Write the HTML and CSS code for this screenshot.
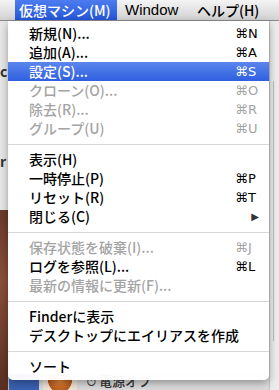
FILE: index.html
```html
<!DOCTYPE html>
<html lang="ja">
<head>
    <meta charset="UTF-8">
    <title>仮想マシン</title>
    <link rel="stylesheet" href="styles.css">
</head>
<body>
    <div class="menubar">
        <div class="bar-item active">仮想マシン(M)</div>
        <div class="bar-item">Window</div>
        <div class="bar-item">ヘルプ(H)</div>
    </div>

    <div class="desktop">
        <div class="left-strip">
            <span class="peek peek-c">c</span>
            <span class="peek peek-r">r</span>
            <div class="photo"></div>
        </div>
        <div class="window-area">
            <div class="bottom-row">
                <div class="thumb-blue"></div>
                <div class="thumb-orange"></div>
                <div class="power"><span class="power-icon">⏻</span> 電源オフ</div>
            </div>
        </div>
        <div class="right-strip">
            <div class="scroll-line"></div>
        </div>

        <!-- dropdown sits over the desktop -->
        <div class="menu">
            <div class="item"><span class="label">新規(N)...</span><span class="key">⌘N</span></div>
            <div class="item"><span class="label">追加(A)...</span><span class="key">⌘A</span></div>
            <div class="item selected"><span class="label">設定(S)...</span><span class="key">⌘S</span></div>
            <div class="item disabled"><span class="label">クローン(O)...</span><span class="key">⌘O</span></div>
            <div class="item disabled"><span class="label">除去(R)...</span><span class="key">⌘R</span></div>
            <div class="item disabled"><span class="label">グループ(U)</span><span class="key">⌘U</span></div>
            <div class="sep"></div>
            <div class="item"><span class="label">表示(H)</span><span class="key"></span></div>
            <div class="item"><span class="label">一時停止(P)</span><span class="key">⌘P</span></div>
            <div class="item"><span class="label">リセット(R)</span><span class="key">⌘T</span></div>
            <div class="item"><span class="label">閉じる(C)</span><span class="key arrow">▶</span></div>
            <div class="sep"></div>
            <div class="item disabled"><span class="label">保存状態を破棄(I)...</span><span class="key">⌘J</span></div>
            <div class="item"><span class="label">ログを参照(L)...</span><span class="key">⌘L</span></div>
            <div class="item disabled"><span class="label">最新の情報に更新(F)...</span><span class="key"></span></div>
            <div class="sep"></div>
            <div class="item"><span class="label">Finderに表示</span><span class="key"></span></div>
            <div class="item"><span class="label">デスクトップにエイリアスを作成</span><span class="key"></span></div>
            <div class="sep"></div>
            <div class="item"><span class="label">ソート</span><span class="key"></span></div>
        </div>
    </div>
</body>
</html>
```

FILE: styles.css
```css
* {
    box-sizing: border-box;
    margin: 0;
    padding: 0;
}
body {
    width: 279px;
    height: 390px;
    overflow: hidden;
    font-family: "Noto Sans CJK JP", "Noto Sans", sans-serif;
    font-size: 14px;
    font-weight: 500;
    color: #000;
    background: #e4e4e4;
}

/* top menu bar */
.menubar {
    display: flex;
    height: 21px;
    padding-left: 15px;
    background: linear-gradient(#f4f4f4, #d2d2d2);
    border-bottom: 1px solid #8a8a8a;
}
.bar-item {
    height: 20px;
    line-height: 20px;
    padding: 0 8px 0 4px;
    white-space: nowrap;
}
.bar-item.active {
    width: 102px;
    color: #fff;
    background: linear-gradient(#4d7cf0, #2456d9);
}
.bar-item:nth-child(2) {
    width: 76px;
    padding-left: 8px;
    font-family: "Liberation Sans", sans-serif;
    font-size: 15px;
}

/* what is behind the menu */
.desktop {
    position: relative;
    display: flex;
    height: 369px;
}
.left-strip {
    position: relative;
    width: 9px;
    display: flex;
    flex-direction: column;
    background: #e8e8e8;
    border-right: 1px solid #b8b8b8;
}
.photo {
    margin-top: auto;
    height: 180px;
    background: linear-gradient(#6a3a2a, #8b5038 40%, #5a2f22);
}
.peek {
    position: absolute;
    left: 0;
    font-weight: bold;
    color: #333;
}
.peek-c { top: 40px; }
.peek-r { top: 130px; }
.window-area {
    flex: 1;
    display: flex;
    flex-direction: column;
    justify-content: flex-end;
    background: #f6f6f6;
}
.bottom-row {
    display: flex;
    align-items: center;
    height: 16px;
    gap: 4px;
    background: #dcdcdc;
}
.thumb-blue {
    width: 30px;
    height: 16px;
    background: #3a62b4;
}
.thumb-orange {
    width: 34px;
    height: 16px;
    background: radial-gradient(circle at 50% 40%, #e58a3a, #b85a1c 60%, #f2e6d8 62%);
}
.power {
    font-size: 13px;
    line-height: 16px;
    color: #333;
    padding-left: 6px;
}
.power-icon {
    font-family: "DejaVu Sans", sans-serif;
    font-size: 11px;
}
.right-strip {
    width: 10px;
    background: #ececec;
    border-left: 1px solid #c4c4c4;
}
.scroll-line {
    margin: 60px 0 0 3px;
    width: 1px;
    height: 260px;
    background: #bcbcbc;
}

/* dropdown */
.menu {
    position: absolute;
    top: 0;
    left: 8px;
    width: 261px;
    padding: 3px 0 4px;
    background: rgba(255, 255, 255, 0.96);
    border-radius: 0 0 5px 5px;
    box-shadow: 0 3px 8px rgba(0, 0, 0, 0.35);
}
.item {
    display: flex;
    height: 19px;
    line-height: 19px;
    padding: 0 10px 0 21px;
}
.item .label {
    flex: 1;
    white-space: nowrap;
}
.item .key {
    width: 24px;
    font-family: "DejaVu Sans", "Liberation Sans", sans-serif;
    font-size: 13px;
}
.item .key.arrow {
    text-align: right;
    font-size: 10px;
    color: #333;
}
.item.disabled {
    color: #a4a4a4;
}
.item.selected {
    color: #fff;
    background: linear-gradient(#5b86ec, #2f5fe0);
}
.sep {
    height: 12px;
    display: flex;
    align-items: center;
}
.sep::after {
    content: "";
    flex: 1;
    height: 1px;
    background: #d8d8d8;
}
```
